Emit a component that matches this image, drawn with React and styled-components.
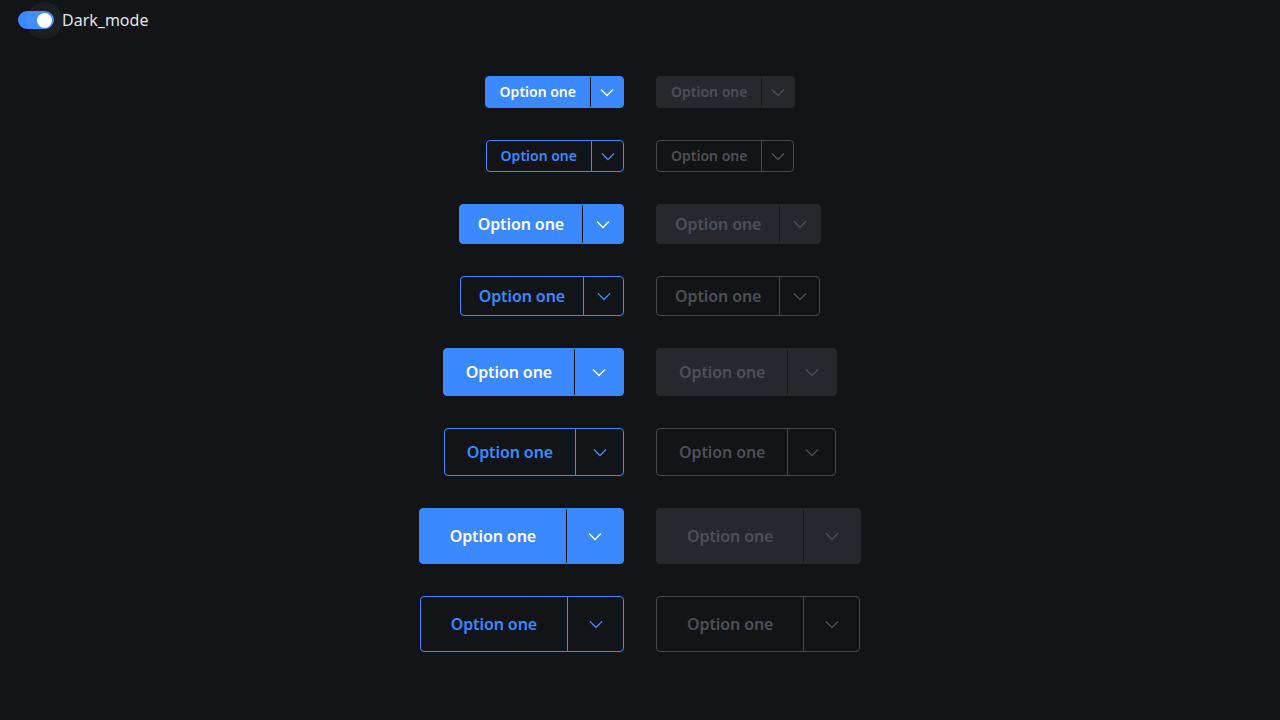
import React, { useState } from "react";
import styled, { createGlobalStyle, css } from "styled-components";

const BLUE = "#3b89ff";
const BG = "#131418";
const MUTED = "#4c4f57";

const sizes = {
  sm: { h: 32, font: 14, padX: 15, track: 0 },
  md: { h: 40, font: 16, padX: 19, track: -0.1 },
  lg: { h: 48, font: 16, padX: 23, track: -0.1 },
  xl: { h: 56, font: 16, padX: 31, track: -0.1 },
};

const GlobalStyle = createGlobalStyle`
  html, body {
    margin: 0;
    background: ${BG};
    font-family: "Noto Sans", "Open Sans", sans-serif;
  }
`;

const Header = styled.div`
  display: flex;
  align-items: center;
  gap: 8px;
  height: 40px;
  padding-left: 18px;
`;

const Switch = styled.button`
  position: relative;
  width: 36px;
  height: 18px;
  border: none;
  padding: 0;
  border-radius: 9px;
  background: ${(p) => (p.$on ? BLUE : "#4a4c53")};
  cursor: pointer;
`;

const Knob = styled.span`
  position: absolute;
  top: 2px;
  left: ${(p) => (p.$on ? "19px" : "3px")};
  width: 15px;
  height: 15px;
  border-radius: 50%;
  background: #fff;

  &::before {
    content: "";
    position: absolute;
    left: -11px;
    top: -11px;
    width: 37px;
    height: 37px;
    border-radius: 50%;
    background: rgba(255, 255, 255, 0.045);
  }
`;

const Label = styled.span`
  color: #e4e5e8;
  font-size: 16px;
  position: relative;
`;

const Grid = styled.div`
  display: grid;
  grid-template-columns: 1fr 1fr;
  column-gap: 32px;
  row-gap: 32px;
  margin-top: 36px;
`;

const Cell = styled.div`
  display: flex;
  justify-content: ${(p) => (p.$right ? "flex-start" : "flex-end")};
`;

const tone = (p) => {
  if (p.$outline) {
    return css`
      background: transparent;
      border-color: ${p.$disabled ? "#46484e" : BLUE};
      color: ${p.$disabled ? MUTED : BLUE};
    `;
  }
  return css`
    background: ${p.$disabled ? "#27282d" : BLUE};
    border-color: ${p.$disabled ? "#27282d" : BLUE};
    color: ${p.$disabled ? MUTED : "#fff"};
  `;
};

const Group = styled.div`
  display: inline-flex;
  box-sizing: border-box;
  height: ${(p) => p.$h}px;
  border: 1px solid;
  border-radius: 4px;
  ${tone}
`;

const Main = styled.button`
  all: unset;
  display: flex;
  align-items: center;
  padding: 0 ${(p) => p.$padX - 1}px 1px;
  font-family: "Noto Sans", sans-serif;
  font-weight: 600;
  font-size: ${(p) => p.$font}px;
  letter-spacing: ${(p) => p.$track}px;
  color: inherit;
  cursor: ${(p) => (p.$disabled ? "default" : "pointer")};
`;

const Drop = styled.button`
  all: unset;
  box-sizing: border-box;
  display: flex;
  align-items: center;
  justify-content: center;
  width: ${(p) => (p.$outline ? p.$h : p.$h + 1)}px;
  border-left: 1px solid
    ${(p) => (p.$outline ? (p.$disabled ? "#46484e" : BLUE) : p.$disabled ? "#18191d" : BG)};
  color: inherit;
  cursor: ${(p) => (p.$disabled ? "default" : "pointer")};
`;

const Chevron = () => (
  <svg width="16" height="16" viewBox="0 0 16 16" fill="none">
    <path d="M2 5.5l6 6 6-6" stroke="currentColor" strokeWidth="1.4" />
  </svg>
);

const SplitButton = ({ size, outline, disabled }) => {
  const s = sizes[size];
  return (
    <Group $h={s.h} $outline={outline} $disabled={disabled}>
      <Main $padX={s.padX} $font={s.font} $track={s.track} $disabled={disabled}>
        Option one
      </Main>
      <Drop $h={s.h} $outline={outline} $disabled={disabled}>
        <Chevron />
      </Drop>
    </Group>
  );
};

const App = () => {
  const [dark, setDark] = useState(true);
  const rows = [];
  ["sm", "md", "lg", "xl"].forEach((size) => {
    [false, true].forEach((outline) => rows.push({ size, outline }));
  });

  return (
    <>
      <GlobalStyle />
      <Header>
        <Switch $on={dark} onClick={() => setDark(!dark)}>
          <Knob $on={dark} />
        </Switch>
        <Label>Dark_mode</Label>
      </Header>
      <Grid>
        {rows.map((r) => (
          <React.Fragment key={r.size + r.outline}>
            <Cell>
              <SplitButton size={r.size} outline={r.outline} />
            </Cell>
            <Cell $right>
              <SplitButton size={r.size} outline={r.outline} disabled />
            </Cell>
          </React.Fragment>
        ))}
      </Grid>
    </>
  );
};

export default App;
